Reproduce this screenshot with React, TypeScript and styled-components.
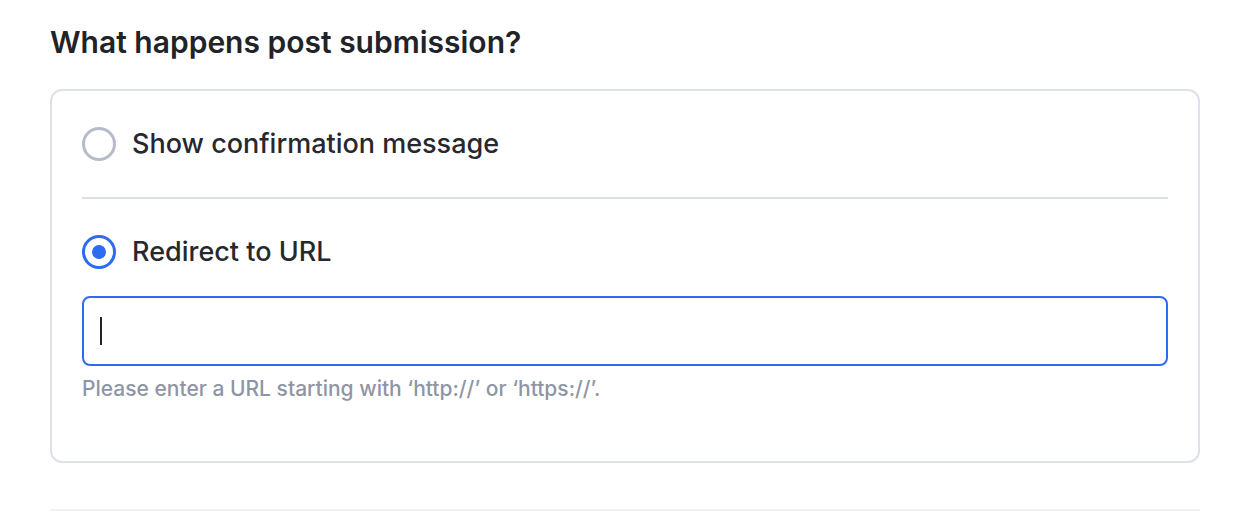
import React from "react";
import styled, { createGlobalStyle } from "styled-components";

const Global = createGlobalStyle`
  html, body { margin: 0; padding: 0; background: #ffffff; }
  body { font-family: Inter, "Noto Sans", sans-serif; -webkit-font-smoothing: antialiased; }
  * { box-sizing: border-box; }
`;

const Page = styled.div`
  padding: 22px 46px 0 50px;
  width: 1246px;
`;

const Heading = styled.h2`
  margin: 0 0 27px 0;
  font-size: 30px;
  line-height: 40px;
  font-weight: 600;
  color: #222328;
`;

const Card = styled.div`
  border: 2px solid #dfe1ea;
  border-radius: 12px;
  padding: 0 30px 60px 30px;
  display: flex;
  flex-direction: column;
`;

const OptionRow = styled.label<{ $divider?: boolean }>`
  display: flex;
  align-items: center;
  gap: 16px;
  padding: 36px 0;
  border-bottom: ${(p) => (p.$divider ? "2px solid #dcdfe6" : "none")};
  cursor: pointer;
`;

const Radio = styled.span<{ $checked?: boolean }>`
  width: 34px;
  height: 34px;
  border-radius: 50%;
  border: 3px solid ${(p) => (p.$checked ? "#2d6bf0" : "#b5bbc9")};
  display: flex;
  align-items: center;
  justify-content: center;
  flex-shrink: 0;
  &::after {
    content: "";
    width: 14px;
    height: 14px;
    border-radius: 50%;
    background: #2d6bf0;
    display: ${(p) => (p.$checked ? "block" : "none")};
  }
`;

const OptionText = styled.span`
  font-size: 27px;
  line-height: 34px;
  color: #27282d;
  font-weight: 500;
`;

const Section = styled.div`
  display: flex;
  flex-direction: column;
`;

const SecondRow = styled(OptionRow)`
  padding: 36px 0 27px 0;
`;

const InputWrap = styled.div`
  position: relative;
`;

const Input = styled.input`
  display: block;
  width: 100%;
  height: 70px;
  border: 2px solid #2d6bf0;
  border-radius: 8px;
  padding: 0 16px;
  font-family: inherit;
  font-size: 24px;
  color: #222328;
  outline: none;
  caret-color: transparent;
`;

const Caret = styled.span`
  position: absolute;
  left: 18px;
  top: 21px;
  width: 2px;
  height: 28px;
  background: #222328;
  pointer-events: none;
`;

const Helper = styled.div`
  margin-top: 11px;
  font-size: 21px;
  line-height: 24px;
  font-weight: 500;
  color: #8e95a5;
`;

const BottomRule = styled.div`
  margin-top: 46px;
  height: 2px;
  background: #f0f0f4;
`;

export default function App() {
  return (
    <>
      <Global />
      <Page>
        <Heading>What happens post submission?</Heading>
        <Card>
          <OptionRow $divider>
            <Radio />
            <OptionText>Show confirmation message</OptionText>
          </OptionRow>
          <Section>
            <SecondRow>
              <Radio $checked />
              <OptionText>Redirect to URL</OptionText>
            </SecondRow>
            <InputWrap>
              <Input aria-label="Redirect URL" />
              <Caret />
            </InputWrap>
            <Helper>Please enter a URL starting with ‘http://’ or ‘https://’.</Helper>
          </Section>
        </Card>
        <BottomRule />
      </Page>
    </>
  );
}
